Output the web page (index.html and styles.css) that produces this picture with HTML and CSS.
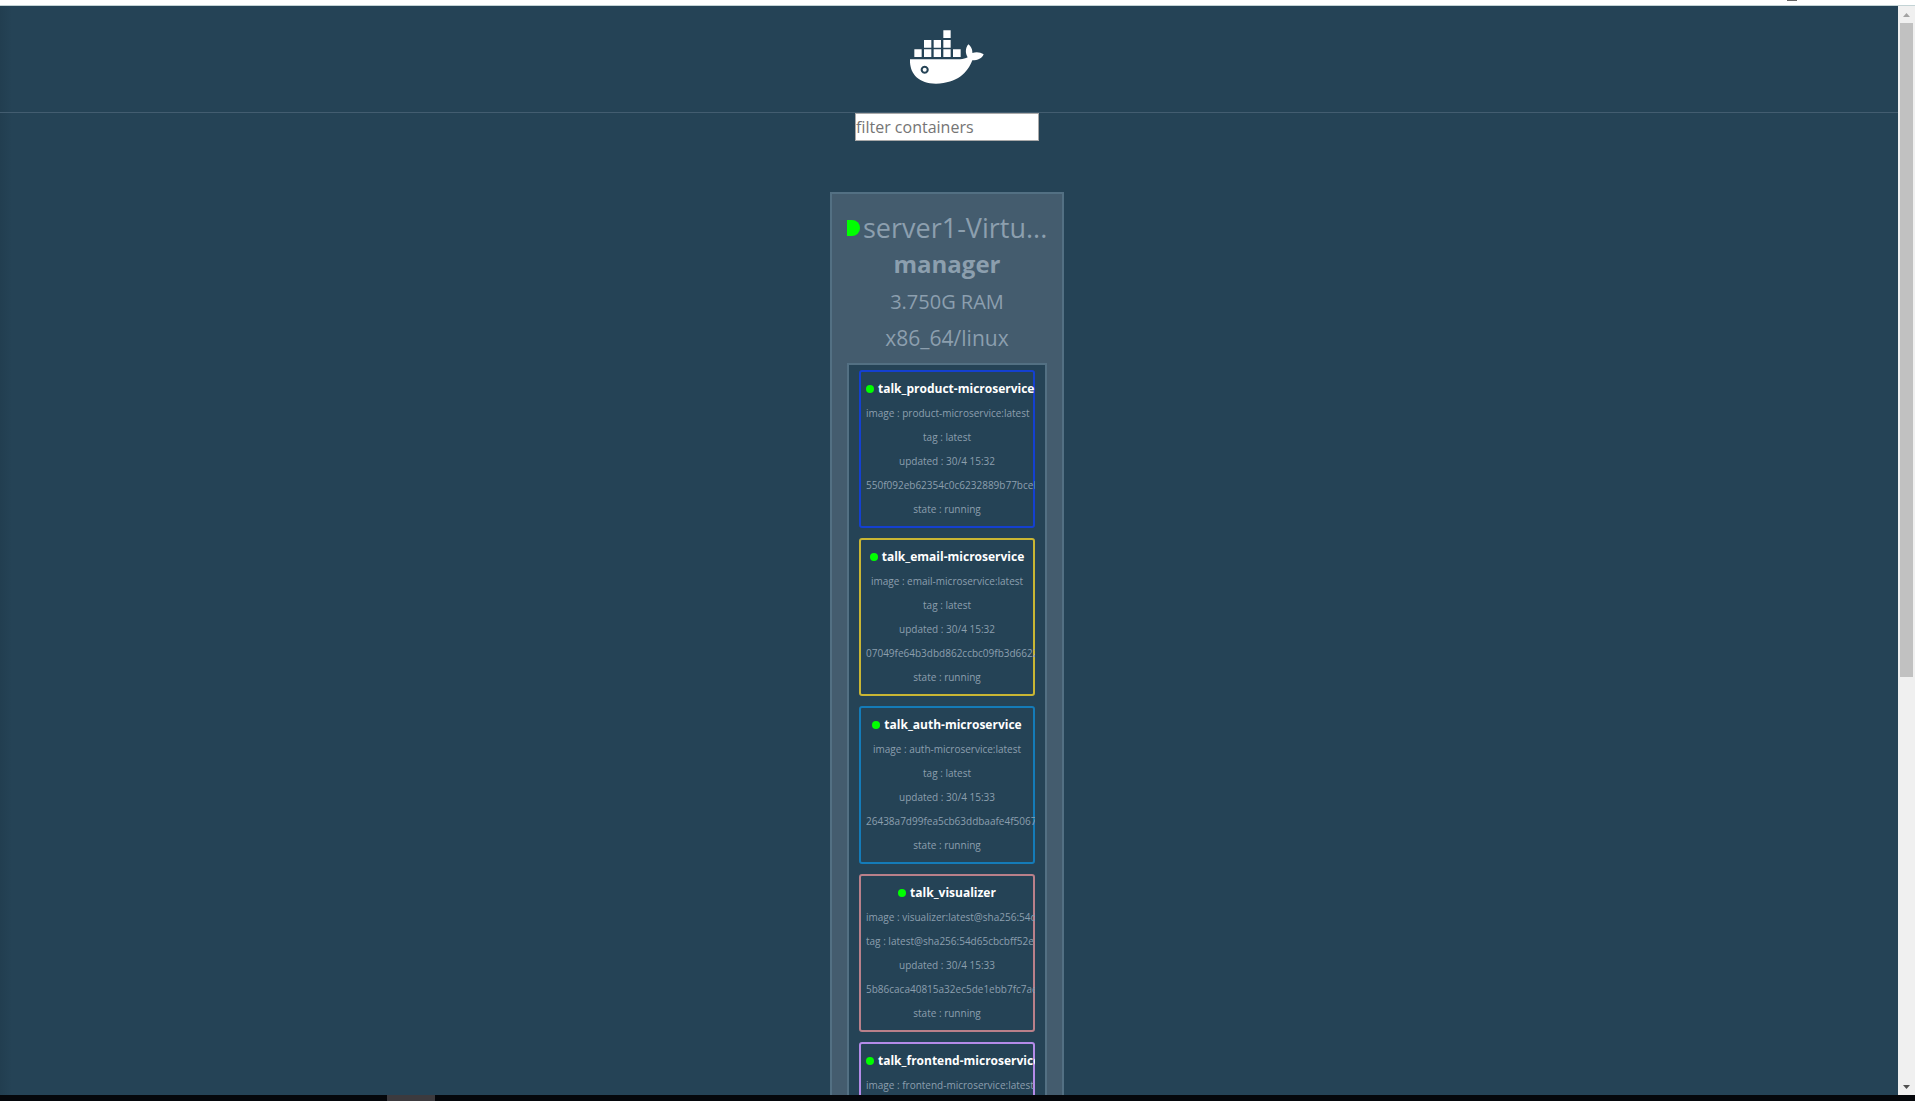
FILE: index.html
```html
<!DOCTYPE html>
<html lang="en">
<head>
<meta charset="utf-8">
<title>Visualizer</title>
<link rel="stylesheet" href="styles.css">
</head>
<body>
<div class="window">
  <div class="toolbar-edge"><span class="toolbar-mark"></span></div>
  <div class="viewport">
    <div class="page">
      <header class="header">
        <svg class="logo" viewBox="30 30 222 162" role="img" aria-label="Docker">
          <path d="M130 31h22v23h-22zM72 60h22v23h-22zM101 60h22v23h-22zM130 60h22v23h-22zM43 88h22v23h-22zM72 88h22v23h-22zM101 88h22v23h-22zM130 88h22v23h-22zM159 88h23v23h-23z"/>
          <path fill-rule="evenodd" d="M30 118H180C190 117 197 115 203 112C195 100 196 84 205 73C213 79 218 89 217 99C228 95 241 96 251 103C246 115 234 121 217 121C203 158 172 190 108 191C53 191 28 158 30 118zM74 137a12 12 0 1 0 0.1 0z"/>
          <circle cx="74" cy="149" r="6"/>
        </svg>
      </header>
      <main class="main">
        <input class="filter" type="text" placeholder="filter containers" aria-label="filter containers">
        <section class="node">
          <div class="node-name"><span class="node-dot"></span><span>server1-Virtu...</span></div>
          <div class="node-role">manager</div>
          <div class="node-memory">3.750G RAM</div>
          <div class="node-platform">x86_64/linux</div>
          <div class="tasks">
            <article class="task blue">
              <h2 class="task-name"><span class="dot"></span>talk_product-microservice</h2>
              <p>image : product-microservice:latest</p>
              <p>tag : latest</p>
              <p>updated : 30/4 15:32</p>
              <p>550f092eb62354c0c6232889b77bceb</p>
              <p>state : running</p>
            </article>
            <article class="task yellow">
              <h2 class="task-name"><span class="dot"></span>talk_email-microservice</h2>
              <p>image : email-microservice:latest</p>
              <p>tag : latest</p>
              <p>updated : 30/4 15:32</p>
              <p>07049fe64b3dbd862ccbc09fb3d6622</p>
              <p>state : running</p>
            </article>
            <article class="task cyan">
              <h2 class="task-name"><span class="dot"></span>talk_auth-microservice</h2>
              <p>image : auth-microservice:latest</p>
              <p>tag : latest</p>
              <p>updated : 30/4 15:33</p>
              <p>26438a7d99fea5cb63ddbaafe4f5067</p>
              <p>state : running</p>
            </article>
            <article class="task rose">
              <h2 class="task-name"><span class="dot"></span>talk_visualizer</h2>
              <p>image : visualizer:latest@sha256:54d</p>
              <p>tag : latest@sha256:54d65cbcbff52e</p>
              <p>updated : 30/4 15:33</p>
              <p>5b86caca40815a32ec5de1ebb7fc7ae</p>
              <p>state : running</p>
            </article>
            <article class="task violet">
              <h2 class="task-name"><span class="dot"></span>talk_frontend-microservice</h2>
              <p>image : frontend-microservice:latest</p>
            </article>
          </div>
        </section>
      </main>
    </div>
    <div class="scrollbar">
      <button class="arrow up" type="button" aria-label="Scroll up"><svg viewBox="0 0 7 4"><path d="M0 4L3.500 0L7 4z"/></svg></button>
      <div class="track"><div class="thumb"></div></div>
      <button class="arrow down" type="button" aria-label="Scroll down"><svg viewBox="0 0 7 4"><path d="M0 0H7L3.500 4z"/></svg></button>
    </div>
  </div>
  <div class="taskbar"><span class="taskbar-item"></span></div>
</div>
</body>
</html>
```
FILE: styles.css
```css
* { box-sizing: border-box; }

body {
  margin: 0;
  font-family: "Open Sans", sans-serif;
  color: #8c9fae;
  background: #254356;
}

.window {
  display: flex;
  flex-direction: column;
  height: 100vh;
  overflow: hidden;
}

.toolbar-edge {
  flex: none;
  display: flex;
  justify-content: flex-end;
  height: 6px;
  padding-right: 118px;
  background: #fff;
  border-bottom: 1px solid #c3d3d5;
}

.toolbar-mark {
  width: 10px;
  height: 1px;
  background: #666;
}

.viewport {
  flex: 1;
  display: flex;
  min-height: 0;
}

.page {
  flex: 1;
  min-width: 0;
  overflow: hidden;
  background: linear-gradient(to right, #223e50, #254356 12px);
}

.header {
  display: flex;
  justify-content: center;
  padding: 24px 4px 28px 0;
  border-bottom: 1px solid #435d70;
}

.logo {
  width: 74px;
  height: 54px;
  fill: #fff;
}

.main {
  display: flex;
  flex-direction: column;
  align-items: center;
  padding-right: 4px;
}

.filter {
  width: 184px;
  height: 28px;
  padding: 0;
  border: 1px solid #a9a9a9;
  background: #fff;
  font: 16px "Open Sans", sans-serif;
}

.filter::placeholder { color: #757575; }

.node {
  width: 234px;
  margin-top: 51px;
  padding: 15px;
  border: 2px solid #537083;
  background: #445c6e;
  text-align: center;
}

.node-name {
  display: flex;
  align-items: center;
  gap: 3px;
  font-size: 27px;
  line-height: 37px;
  white-space: nowrap;
}

.node-dot {
  flex: none;
  width: 13px;
  height: 16px;
  border-radius: 0 8px 8px 0;
  background: #0f0;
}

.node-role {
  margin-bottom: 2px;
  font-size: 24px;
  font-weight: bold;
  line-height: 36px;
}

.node-memory {
  font-size: 20px;
  line-height: 36px;
}

.node-platform {
  font-size: 21px;
  line-height: 36px;
}

.tasks {
  display: flex;
  flex-direction: column;
  gap: 10px;
  margin-top: 7px;
  padding: 5px 10px;
  border: 2px solid #537083;
  background: #254356;
}

.task {
  height: 158px;
  padding: 5px;
  border: 2px solid;
  border-radius: 3px;
  overflow: clip;
  overflow-clip-margin: border-box;
  font-size: 10px;
  line-height: 24px;
  white-space: nowrap;
}

.task p {
  width: max-content;
  min-width: 100%;
  margin: 0;
  color: #8c9fae;
}

.task-name {
  display: flex;
  align-items: center;
  justify-content: center;
  gap: 4px;
  width: max-content;
  min-width: 100%;
  margin: 0;
  color: #fff;
  font-size: 12px;
  line-height: 24px;
}

.dot {
  width: 8px;
  height: 8px;
  border-radius: 50%;
  background: #0f0;
}

.blue { border-color: #1440d0; }
.yellow { border-color: #c9b634; }
.cyan { border-color: #147bb8; }
.rose { border-color: #b9808a; }
.violet { border-color: #b48be8; }

.scrollbar {
  display: flex;
  flex-direction: column;
  width: 17px;
  background: #f0f0f0;
}

.arrow {
  display: flex;
  align-items: center;
  justify-content: center;
  height: 17px;
  padding: 0;
  border: 0;
  background: none;
}

.arrow svg { width: 7px; height: 4px; }
.up { fill: #a3a3a3; }
.down { fill: #505050; }

.track {
  flex: 1;
  padding: 0 2px;
}

.thumb {
  height: 62%;
  background: #c1c1c1;
}

.taskbar {
  flex: none;
  height: 6px;
  padding-left: 387px;
  background: #05070b;
}

.taskbar-item {
  display: block;
  width: 48px;
  height: 6px;
  background: #3c3a3e;
}
```
